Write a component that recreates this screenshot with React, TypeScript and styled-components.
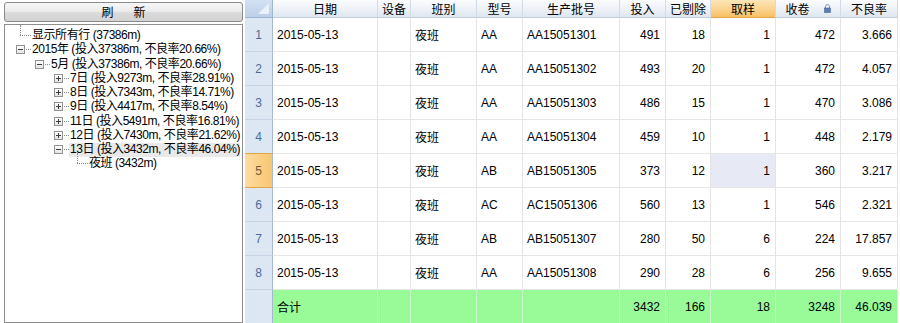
import React from 'react'
import styled, { createGlobalStyle, css } from 'styled-components'

const GlobalStyle = createGlobalStyle`
  html, body {
    margin: 0;
    padding: 0;
    background: #ffffff;
  }
  body {
    font-family: 'Liberation Sans', 'Noto Sans CJK SC', sans-serif;
    font-size: 12px;
    color: #000;
  }
`;

const Page = styled.div`
  display: flex;
  width: 900px;
  height: 323px;
  overflow: hidden;
  background: #ffffff;
`;

const LeftPanel = styled.div`
  width: 245px;
  flex-shrink: 0;
  display: flex;
  flex-direction: column;
  gap: 2px;
  padding: 2px 2px 0 4px;
  box-sizing: border-box;
`;

const RefreshButton = styled.button`
  height: 20px;
  border: 1px solid #8a8a8a;
  border-radius: 3px;
  background: linear-gradient(#f7f7f7 0%, #ececec 45%, #dadada 55%, #d3d3d3 100%);
  font-family: 'Noto Sans CJK SC', sans-serif;
  font-size: 12px;
  letter-spacing: 20px;
  text-indent: 20px;
  padding: 0;
  color: #000;
  line-height: 18px;
`;

const TreeBox = styled.div`
  flex: 1;
  border: 1px solid #8d8d8d;
  background: #ffffff;
  padding-top: 4px;
`;

const TreeRow = styled.div<{ $level: number }>`
  display: flex;
  align-items: stretch;
  height: 14.25px;
  padding-left: ${p => 11 + p.$level * 19}px;
`;

const Gutter = styled.div`
  width: 15px;
  flex-shrink: 0;
  position: relative;
`;

const Expander = styled.div`
  position: absolute;
  left: 0;
  top: 2px;
  width: 7px;
  height: 7px;
  border: 1px solid #929292;
  background: linear-gradient(#ffffff, #e4e4e4);
  display: flex;
  align-items: center;
  justify-content: center;
`;

const ExpanderBar = styled.div<{ $vertical?: boolean }>`
  position: absolute;
  background: #3c3c3c;
  ${p => p.$vertical
    ? css`width: 1px; height: 5px; left: 3px; top: 1px;`
    : css`width: 5px; height: 1px; left: 1px; top: 3px;`}
`;

const HLine = styled.div<{ $from: number }>`
  position: absolute;
  left: ${p => p.$from}px;
  right: 0;
  top: 6px;
  border-top: 1px dotted #8a8a8a;
`;

const VLine = styled.div`
  position: absolute;
  left: 4px;
  top: -4px;
  height: 10px;
  border-left: 1px dotted #8a8a8a;
`;

const TreeLabel = styled.div<{ $selected?: boolean }>`
  flex: 1;
  font-family: 'Liberation Sans', 'Noto Sans CJK SC', sans-serif;
  font-size: 12px;
  letter-spacing: -0.45px;
  line-height: 13px;
  white-space: nowrap;
  padding-left: 1px;
  margin-right: 2px;
  background: ${p => p.$selected ? '#e9e9e9' : 'transparent'};
`;

type TreeNode = { level: number; text: string; kind: 'leaf' | 'open' | 'closed'; selected?: boolean };

const treeNodes: TreeNode[] = [
  { level: 0, text: '显示所有行 (37386m)', kind: 'leaf' },
  { level: 0, text: '2015年 (投入37386m, 不良率20.66%)', kind: 'open' },
  { level: 1, text: '5月 (投入37386m, 不良率20.66%)', kind: 'open' },
  { level: 2, text: '7日 (投入9273m, 不良率28.91%)', kind: 'closed' },
  { level: 2, text: '8日 (投入7343m, 不良率14.71%)', kind: 'closed' },
  { level: 2, text: '9日 (投入4417m, 不良率8.54%)', kind: 'closed' },
  { level: 2, text: '11日 (投入5491m, 不良率16.81%)', kind: 'closed' },
  { level: 2, text: '12日 (投入7430m, 不良率21.62%)', kind: 'closed' },
  { level: 2, text: '13日 (投入3432m, 不良率46.04%)', kind: 'open', selected: true },
  { level: 3, text: '夜班 (3432m)', kind: 'leaf' },
];

// ---- grid ----

const COLS = '28px 105px 33px 66px 46px 97px 46px 45px 65px 65px 57px';

const Grid = styled.div`
  flex: 1;
  display: grid;
  grid-template-columns: ${COLS};
  grid-auto-rows: 34px;
  grid-template-rows: 18px;
  align-content: start;
  background: #ffffff;
`;

const Corner = styled.div`
  background: linear-gradient(#d3e1f3, #bccfe9);
  border-right: 1px solid #9fb6d3;
  border-bottom: 1px solid #9fb6d3;
  position: relative;
  display: flex;
  align-items: flex-end;
  justify-content: flex-end;
`;

const HeaderCell = styled.div<{ $active?: boolean }>`
  display: flex;
  align-items: center;
  justify-content: center;
  gap: 14px;
  font-size: 12px;
  white-space: nowrap;
  border-right: 1px solid #d3dbe6;
  border-bottom: 1px solid #c4cfdd;
  background: ${p => p.$active
    ? 'linear-gradient(#fde6b8 0%, #fbd591 50%, #f7c066 100%)'
    : 'linear-gradient(#fbfcfe 0%, #eef2f8 50%, #dfe6ef 100%)'};
  ${p => p.$active && css`border-bottom-color: #e3a54a;`}
`;

const RowHeader = styled.div<{ $active?: boolean }>`
  display: flex;
  align-items: center;
  justify-content: center;
  font-size: 12px;
  color: ${p => p.$active ? '#6b5a3e' : '#4a6c9b'};
  background: ${p => p.$active
    ? 'linear-gradient(90deg, #fddca0, #f8c670)'
    : '#dde7f4'};
  border-right: 1px solid #a5b9d3;
  border-bottom: 1px solid ${p => p.$active ? '#e3a54a' : '#c5d3e5'};
  ${p => p.$active && css`border-top: 1px solid #e3a54a; margin-top: -1px;`}
`;

const Cell = styled.div<{ $align?: 'left' | 'right'; $total?: boolean; $selected?: boolean }>`
  display: flex;
  align-items: center;
  justify-content: ${p => p.$align === 'right' ? 'flex-end' : 'flex-start'};
  padding: ${p => p.$align === 'right' ? '0 5px 0 0' : '0 0 0 4px'};
  font-size: 12px;
  white-space: nowrap;
  overflow: hidden;
  border-right: 1px solid ${p => p.$total ? '#c9f7c9' : '#e4e4e4'};
  border-bottom: 1px solid ${p => p.$total ? '#c9f7c9' : '#e6e6e6'};
  background: ${p => p.$total ? '#98fb98' : p.$selected ? '#e7eaf5' : '#ffffff'};
`;

const headers = ['日期', '设备', '班别', '型号', '生产批号', '投入', '已剔除', '取样', '收卷', '不良率'];
const rightAligned = [false, false, false, false, false, true, true, true, true, true];

type Row = [string, string, string, string, string, number, number, number, number, string];

const rows: Row[] = [
  ['2015-05-13', '', '夜班', 'AA', 'AA15051301', 491, 18, 1, 472, '3.666'],
  ['2015-05-13', '', '夜班', 'AA', 'AA15051302', 493, 20, 1, 472, '4.057'],
  ['2015-05-13', '', '夜班', 'AA', 'AA15051303', 486, 15, 1, 470, '3.086'],
  ['2015-05-13', '', '夜班', 'AA', 'AA15051304', 459, 10, 1, 448, '2.179'],
  ['2015-05-13', '', '夜班', 'AB', 'AB15051305', 373, 12, 1, 360, '3.217'],
  ['2015-05-13', '', '夜班', 'AC', 'AC15051306', 560, 13, 1, 546, '2.321'],
  ['2015-05-13', '', '夜班', 'AB', 'AB15051307', 280, 50, 6, 224, '17.857'],
  ['2015-05-13', '', '夜班', 'AA', 'AA15051308', 290, 28, 6, 256, '9.655'],
];

const totals = ['合计', '', '', '', '', 3432, 166, 18, 3248, '46.039'];

const LockIcon = () => (
  <svg width="7" height="9" viewBox="0 0 7 9">
    <path d="M1.5 4 V2.6 A2 2 0 0 1 5.5 2.6 V4" fill="none" stroke="#7f93b3" strokeWidth="1" />
    <rect x="0.5" y="4" width="6" height="4.5" fill="#5d7fb6" stroke="#46659a" strokeWidth="0.6" />
  </svg>
);

const CornerMark = () => (
  <svg width="27" height="17" viewBox="0 0 27 17">
    <polygon points="24,3 24,14 13,14" fill="#eaf1fa" />
  </svg>
);

const ACTIVE_ROW = 4;
const ACTIVE_COL = 7;

export default function App() {
  return (
    <Page>
      <GlobalStyle />
      <LeftPanel>
        <RefreshButton>刷新</RefreshButton>
        <TreeBox>
          {treeNodes.map((n, i) => (
            <TreeRow key={i} $level={n.level}>
              <Gutter>
                {n.kind === 'leaf' ? (
                  <>
                    <VLine />
                    <HLine $from={4} />
                  </>
                ) : (
                  <>
                    <Expander>
                      <ExpanderBar />
                      {n.kind === 'closed' && <ExpanderBar $vertical />}
                    </Expander>
                    <HLine $from={10} />
                  </>
                )}
              </Gutter>
              <TreeLabel $selected={n.selected}>{n.text}</TreeLabel>
            </TreeRow>
          ))}
        </TreeBox>
      </LeftPanel>

      <Grid>
        <Corner><CornerMark /></Corner>
        {headers.map((h, i) => (
          <HeaderCell key={h} $active={i === ACTIVE_COL}>
            {i === 8 ? (<><span>{h}</span><LockIcon /></>) : h}
          </HeaderCell>
        ))}

        {rows.map((r, ri) => (
          <React.Fragment key={ri}>
            <RowHeader $active={ri === ACTIVE_ROW}>{ri + 1}</RowHeader>
            {r.map((v, ci) => (
              <Cell
                key={ci}
                $align={rightAligned[ci] ? 'right' : 'left'}
                $selected={ri === ACTIVE_ROW && ci === ACTIVE_COL}
              >
                {v}
              </Cell>
            ))}
          </React.Fragment>
        ))}

        <RowHeader />
        {totals.map((v, ci) => (
          <Cell key={ci} $total $align={rightAligned[ci] ? 'right' : 'left'}>{v}</Cell>
        ))}
      </Grid>
    </Page>
  )
}
